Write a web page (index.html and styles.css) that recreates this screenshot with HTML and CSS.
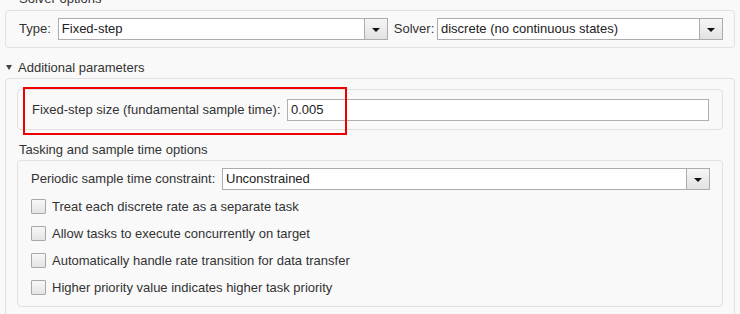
FILE: index.html
```html
<!DOCTYPE html>
<html lang="en">

<head>
    <meta charset="UTF-8">
    <meta name="viewport" content="width=device-width, initial-scale=1.0">
    <title>Solver Configuration</title>
    <link rel="stylesheet" href="styles.css">
</head>

<body>
    <div class="pane">
        <div class="section-title cut">Solver options</div>
        <div class="group solver">
            <span class="lbl">Type:</span>
            <div class="select type-select">
                <span class="val">Fixed-step</span>
                <span class="drop"><i class="caret"></i></span>
            </div>
            <span class="lbl solver-lbl">Solver:</span>
            <div class="select solver-select">
                <span class="val">discrete (no continuous states)</span>
                <span class="drop"><i class="caret"></i></span>
            </div>
        </div>

        <div class="toggle"><span class="tri"></span>Additional parameters</div>
        <div class="group outer">
            <div class="group inner step">
                <span class="lbl">Fixed-step size (fundamental sample time):</span>
                <div class="input step-input">0.005</div>
                <!-- annotation frame drawn over the field -->
                <div class="highlight"></div>
            </div>

            <div class="section-title sub">Tasking and sample time options</div>
            <div class="group inner tasking">
                <div class="row">
                    <span class="lbl">Periodic sample time constraint:</span>
                    <div class="select periodic-select">
                        <span class="val">Unconstrained</span>
                        <span class="drop"><i class="caret"></i></span>
                    </div>
                </div>
                <label class="check"><span class="box"></span>Treat each discrete rate as a separate task</label>
                <label class="check"><span class="box"></span>Allow tasks to execute concurrently on target</label>
                <label class="check"><span class="box"></span>Automatically handle rate transition for data transfer</label>
                <label class="check"><span class="box"></span>Higher priority value indicates higher task priority</label>
            </div>
        </div>
    </div>
</body>

</html>
```

FILE: styles.css
```css
body {
    margin: 0;
    font-family: 'Liberation Sans', Arial, sans-serif;
    font-size: 13px;
    line-height: 16px;
    color: #333;
    background-color: #f9f9f9;
    overflow: hidden;
}

.pane {
    width: 730px;
    padding-left: 5px;
}

.section-title {
    height: 16px;
    padding-left: 14px;
    color: #333;
}

.section-title.cut {
    margin-top: -9px;
}

.section-title.sub {
    margin-top: 12px;
    padding-left: 2px;
}

.group {
    border: 1px solid #e1e1e1;
    border-radius: 4px;
    box-sizing: border-box;
}

.solver {
    display: flex;
    align-items: center;
    margin-top: 3px;
    height: 38px;
    padding: 7px 11px 7px 13px;
}

.lbl {
    white-space: nowrap;
}

.select {
    display: flex;
    height: 22px;
    box-sizing: border-box;
    border: 1px solid #acacac;
    background-color: #fff;
    color: #222;
}

.select .val {
    flex: 1;
    padding-left: 3px;
    line-height: 20px;
    white-space: nowrap;
}

.select .drop {
    width: 22px;
    border-left: 1px solid #acacac;
    background: linear-gradient(#f6f6f6, #e2e2e2);
    display: flex;
    align-items: center;
    justify-content: center;
}

.caret {
    width: 0;
    height: 0;
    border-left: 4px solid transparent;
    border-right: 4px solid transparent;
    border-top: 4px solid #111;
    margin-top: 1px;
}

.type-select {
    width: 330px;
    margin-left: 7px;
}

.solver-lbl {
    margin-left: 6px;
}

.solver-select {
    width: 286px;
    margin-left: auto;
}

.toggle {
    display: flex;
    align-items: center;
    margin-top: 12px;
    height: 16px;
    padding-left: 1px;
}

.tri {
    width: 0;
    height: 0;
    border-left: 3px solid transparent;
    border-right: 3px solid transparent;
    border-top: 5px solid #444;
    margin-right: 6px;
    margin-top: -1px;
}

.outer {
    margin-top: 2px;
    padding: 10px 9px 40px 11px;
    border-bottom-left-radius: 0;
    border-bottom-right-radius: 0;
}

.inner {
    width: 706px;
}

.step {
    position: relative;
    display: flex;
    align-items: center;
    height: 41px;
    padding: 0 13px 0 14px;
}

.input {
    height: 22px;
    box-sizing: border-box;
    border: 1px solid #b0b0b0;
    background-color: #fff;
    color: #222;
    padding-left: 3px;
    line-height: 20px;
}

.step-input {
    width: 422px;
    margin-left: auto;
}

.highlight {
    position: absolute;
    left: 5px;
    top: -3px;
    width: 324px;
    height: 48px;
    box-sizing: border-box;
    border: 2px solid #ee0000;
}

.tasking {
    margin-top: 2px;
    height: 147px;
    padding: 7px 12px 4px 13px;
}

.row {
    display: flex;
    align-items: center;
    margin-bottom: 3px;
}

.periodic-select {
    width: 488px;
    margin-left: auto;
}

.check {
    display: flex;
    align-items: center;
    height: 27px;
    color: #333;
}

.check .box {
    width: 15px;
    height: 15px;
    box-sizing: border-box;
    border: 1px solid #a8a8a8;
    border-radius: 1px;
    background: linear-gradient(#f7f7f7, #e4e4e4);
    margin-right: 6px;
}
```
